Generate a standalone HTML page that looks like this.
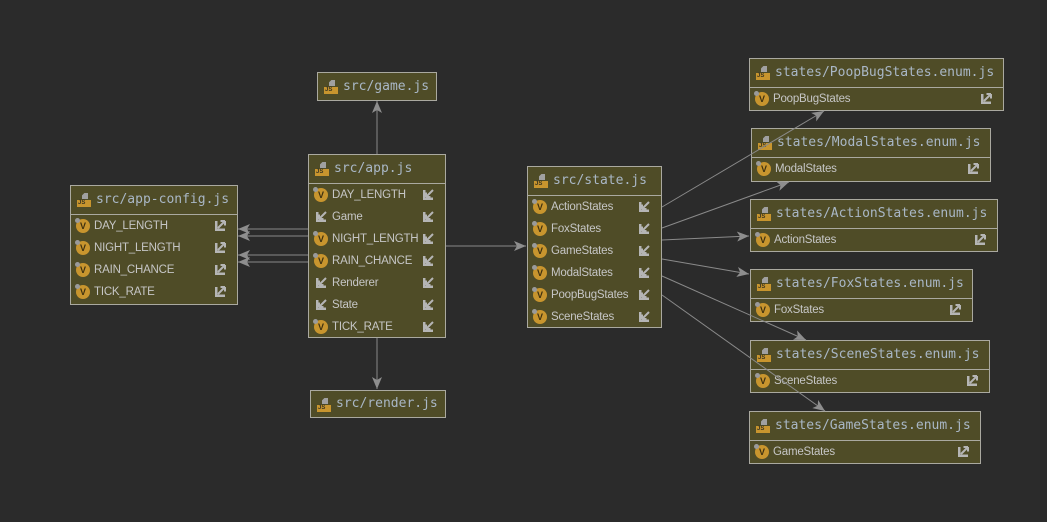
<!DOCTYPE html>
<html><head><meta charset="utf-8"><style>
body{margin:0;width:1047px;height:522px;background:#2b2b2b;position:relative;overflow:hidden;font-family:"Liberation Sans",sans-serif}
.box{position:absolute;background:#4f4c27;border:1px solid #aaa9a0;box-sizing:border-box}
.hd{height:28px;border-bottom:1px solid #aaa9a0;position:relative;font-family:"DejaVu Sans Mono",monospace;font-size:13px;color:#a9b7c6;line-height:28px;padding-left:25px;white-space:nowrap}
.fi{position:absolute;left:6px;top:7px;width:14px;height:14px}
.fi:before{content:"";position:absolute;left:5px;top:0;width:6px;height:6px;background:#a0a0a0;clip-path:polygon(40% 0,100% 0,100% 100%,0 100%,0 40%)}
.fi:after{content:"JS";position:absolute;left:0;top:7px;width:14px;height:7px;background:#c8952e;color:#3a3520;font:bold 6px/7px "Liberation Sans",sans-serif;text-align:left;padding-left:1px;box-sizing:border-box}
.rows{padding-top:0}
.r{height:22px;position:relative;font-size:11.5px;letter-spacing:-0.2px;color:#c6c6c6;line-height:22px;padding-left:23px;white-space:nowrap}
.v{position:absolute;left:5px;top:4px;width:14px;height:14px;border-radius:50%;background:#c8952e;color:#3d3010;font:bold 9px/14px "Liberation Sans",sans-serif;text-align:center;letter-spacing:0}
.v:before{content:"";position:absolute;left:-1px;top:-1px;width:5px;height:5px;border-radius:50%;background:#9a9a9a}
.ic{position:absolute;right:11px;top:5px;width:12px;height:12px}
</style></head><body>
<svg width="0" height="0" style="position:absolute"><defs>
<symbol id="imp" viewBox="0 0 12 12"><path d="M1 1V11H11V8.5H3.5V1Z" fill="#b5b5b5"/><path d="M4 8L11 1M4 8V3.5M4 8H8.5" stroke="#b5b5b5" stroke-width="2" fill="none"/></symbol>
<symbol id="exp" viewBox="0 0 12 12"><path d="M1 1V11H11V8.5H3.5V1Z" fill="#b5b5b5"/><path d="M4 8L11 1M11 1V5.5M11 1H6.5" stroke="#b5b5b5" stroke-width="2" fill="none"/></symbol>
</defs></svg>

<div class="box" style="left:70px;top:185px;width:168px;height:120px"><div class="hd"><span class="fi"></span>src/app-config.js</div><div class="rows">
<div class="r"><span class="v">V</span>DAY_LENGTH<svg class="ic"><use href="#exp"/></svg></div>
<div class="r"><span class="v">V</span>NIGHT_LENGTH<svg class="ic"><use href="#exp"/></svg></div>
<div class="r"><span class="v">V</span>RAIN_CHANCE<svg class="ic"><use href="#exp"/></svg></div>
<div class="r"><span class="v">V</span>TICK_RATE<svg class="ic"><use href="#exp"/></svg></div></div></div>

<div class="box" style="left:317px;top:72px;width:120px;height:29px"><div class="hd" style="border:0;height:27px;line-height:27px"><span class="fi"></span>src/game.js</div></div>
<div class="box" style="left:310px;top:390px;width:136px;height:28px"><div class="hd" style="border:0;height:26px;line-height:26px"><span class="fi"></span>src/render.js</div></div>

<div class="box" style="left:308px;top:154px;width:138px;height:184px"><div class="hd"><span class="fi"></span>src/app.js</div><div class="rows">
<div class="r"><span class="v">V</span>DAY_LENGTH<svg class="ic"><use href="#imp"/></svg></div>
<div class="r"><svg class="ic" style="left:6px;right:auto"><use href="#imp"/></svg>Game<svg class="ic"><use href="#imp"/></svg></div>
<div class="r"><span class="v">V</span>NIGHT_LENGTH<svg class="ic"><use href="#imp"/></svg></div>
<div class="r"><span class="v">V</span>RAIN_CHANCE<svg class="ic"><use href="#imp"/></svg></div>
<div class="r"><svg class="ic" style="left:6px;right:auto"><use href="#imp"/></svg>Renderer<svg class="ic"><use href="#imp"/></svg></div>
<div class="r"><svg class="ic" style="left:6px;right:auto"><use href="#imp"/></svg>State<svg class="ic"><use href="#imp"/></svg></div>
<div class="r"><span class="v">V</span>TICK_RATE<svg class="ic"><use href="#imp"/></svg></div></div></div>

<div class="box" style="left:527px;top:166px;width:135px;height:162px"><div class="hd"><span class="fi"></span>src/state.js</div><div class="rows">
<div class="r"><span class="v">V</span>ActionStates<svg class="ic"><use href="#imp"/></svg></div>
<div class="r"><span class="v">V</span>FoxStates<svg class="ic"><use href="#imp"/></svg></div>
<div class="r"><span class="v">V</span>GameStates<svg class="ic"><use href="#imp"/></svg></div>
<div class="r"><span class="v">V</span>ModalStates<svg class="ic"><use href="#imp"/></svg></div>
<div class="r"><span class="v">V</span>PoopBugStates<svg class="ic"><use href="#imp"/></svg></div>
<div class="r"><span class="v">V</span>SceneStates<svg class="ic"><use href="#imp"/></svg></div></div></div>

<div class="box" style="left:749px;top:58px;width:255px;height:53px"><div class="hd"><span class="fi"></span>states/PoopBugStates.enum.js</div><div class="rows"><div class="r"><span class="v">V</span>PoopBugStates<svg class="ic"><use href="#exp"/></svg></div></div></div>
<div class="box" style="left:751px;top:128px;width:240px;height:54px"><div class="hd"><span class="fi"></span>states/ModalStates.enum.js</div><div class="rows"><div class="r"><span class="v">V</span>ModalStates<svg class="ic"><use href="#exp"/></svg></div></div></div>
<div class="box" style="left:750px;top:199px;width:248px;height:53px"><div class="hd"><span class="fi"></span>states/ActionStates.enum.js</div><div class="rows"><div class="r"><span class="v">V</span>ActionStates<svg class="ic"><use href="#exp"/></svg></div></div></div>
<div class="box" style="left:750px;top:269px;width:223px;height:53px"><div class="hd"><span class="fi"></span>states/FoxStates.enum.js</div><div class="rows"><div class="r"><span class="v">V</span>FoxStates<svg class="ic"><use href="#exp"/></svg></div></div></div>
<div class="box" style="left:750px;top:340px;width:240px;height:53px"><div class="hd"><span class="fi"></span>states/SceneStates.enum.js</div><div class="rows"><div class="r"><span class="v">V</span>SceneStates<svg class="ic"><use href="#exp"/></svg></div></div></div>
<div class="box" style="left:749px;top:411px;width:232px;height:53px"><div class="hd"><span class="fi"></span>states/GameStates.enum.js</div><div class="rows"><div class="r"><span class="v">V</span>GameStates<svg class="ic"><use href="#exp"/></svg></div></div></div>

<svg width="1047" height="522" style="position:absolute;left:0;top:0;pointer-events:none">
<defs><marker id="a" viewBox="0 0 12 10" refX="12" refY="5" markerWidth="12" markerHeight="10" markerUnits="userSpaceOnUse" orient="auto"><path d="M0 0L12 5L0 10L3 5Z" fill="#8e8e8e"/></marker></defs>
<g stroke="#8a8a8a" stroke-width="1" fill="none" marker-end="url(#a)">
<line x1="377" y1="154" x2="377" y2="101"/>
<line x1="377" y1="338" x2="377" y2="389"/>
<line x1="308" y1="229" x2="238" y2="229"/>
<line x1="308" y1="236" x2="238" y2="236"/>
<line x1="308" y1="255" x2="238" y2="255"/>
<line x1="308" y1="262" x2="238" y2="262"/>
<line x1="446" y1="246" x2="526" y2="246"/>
<line x1="662" y1="207" x2="824" y2="111"/>
<line x1="662" y1="228" x2="789" y2="182"/>
<line x1="662" y1="240" x2="749" y2="236"/>
<line x1="662" y1="259" x2="749" y2="274"/>
<line x1="662" y1="276" x2="806" y2="340"/>
<line x1="662" y1="295" x2="825" y2="411"/>
</g></svg>
</body></html>
